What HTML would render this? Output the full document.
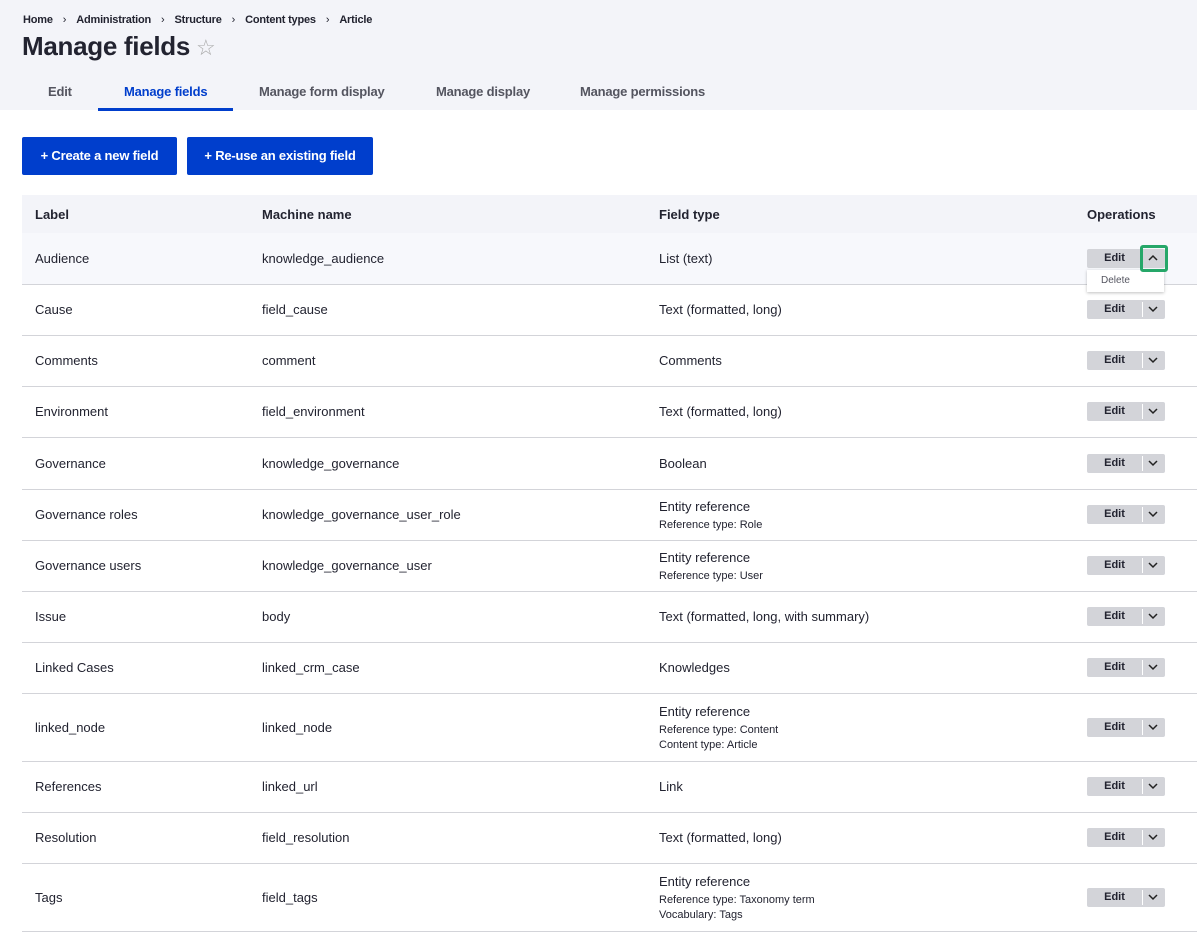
<!DOCTYPE html>
<html><head><meta charset="utf-8"><style>
*{box-sizing:border-box;margin:0;padding:0}
body{width:1197px;height:934px;overflow:hidden;background:#fff;font-family:"Liberation Sans",sans-serif;color:#222330;font-size:13px}
.hdr{background:#f3f4f9;height:110px;position:relative}
.bc{position:absolute;left:23px;top:14px;font-size:11px;font-weight:bold;color:#222330;letter-spacing:-0.2px}
.bc span.s{margin:0 10px;font-weight:normal}
h1{position:absolute;left:22px;top:31px;font-size:26px;font-weight:bold;color:#222330;letter-spacing:-0.3px}
h1 .star{font-weight:normal;color:#aaa;font-size:22px;margin-left:6px}
.tab{position:absolute;top:84px;font-size:13px;font-weight:bold;color:#545560;white-space:nowrap;letter-spacing:-0.2px}
.tab.a{color:#003ecc}
.ul{position:absolute;left:98px;top:108px;width:135px;height:3px;background:#003ecc}
.btn{position:absolute;top:137px;height:38px;background:#003ecc;color:#fff;font-weight:bold;font-size:13px;line-height:38px;text-align:center;border-radius:2px;letter-spacing:-0.2px}
table{position:absolute;left:22px;top:195px;width:1175px;border-collapse:collapse}
th{background:#f3f4f9;height:38px;text-align:left;font-size:13px;font-weight:bold;padding-left:13px}
td{border-bottom:1px solid #d3d4d9;padding-left:13px;font-size:13px;vertical-align:middle}
td small{display:block;font-size:11px;margin-top:5px}
tr.hi td{background:#f7f8fc}
.ops{position:relative;width:78px;height:19px;background:#d3d4d9;border-radius:2px}
.ops b{position:absolute;left:0;top:0;width:55px;line-height:19px;text-align:center;font-size:11px}
.ops i{position:absolute;left:55px;top:2px;width:1px;height:15px;background:#fff}
.ops svg{position:absolute;left:61px;top:5px}
.dd{position:absolute;left:1087px;top:270px;width:77px;height:22px;background:#fff;box-shadow:0 1px 3px rgba(0,0,0,.25);font-size:10px;color:#545560;padding:5px 14px}
.focus{position:absolute;left:1140px;top:245px;width:28px;height:27px;border:3px solid #26a769;border-radius:3px}
</style></head><body>
<div class="hdr">
<div class="bc">Home<span class="s">›</span>Administration<span class="s">›</span>Structure<span class="s">›</span>Content types<span class="s">›</span>Article</div>
<h1>Manage fields<span class="star">☆</span></h1>
<div class="tab" style="left:48px">Edit</div>
<div class="tab a" style="left:124px">Manage fields</div>
<div class="tab" style="left:259px">Manage form display</div>
<div class="tab" style="left:436px">Manage display</div>
<div class="tab" style="left:580px">Manage permissions</div>
<div class="ul"></div>
</div>
<div class="btn" style="left:22px;width:155px">+ Create a new field</div>
<div class="btn" style="left:187px;width:186px">+ Re-use an existing field</div>
<table>
<colgroup><col style="width:227px"><col style="width:397px"><col style="width:428px"><col></colgroup>
<tr><th>Label</th><th>Machine name</th><th>Field type</th><th>Operations</th></tr>
<tr class="hi" style="height:51px"><td>Audience</td><td>knowledge_audience</td><td>List (text)</td><td><div class="ops"><b>Edit</b><i></i><svg width="10" height="8" viewBox="0 0 10 8"><path d="M1 6L5 2L9 6" fill="none" stroke="#222" stroke-width="1.5"/></svg></div></td></tr>
<tr style="height:51px"><td>Cause</td><td>field_cause</td><td>Text (formatted, long)</td><td><div class="ops"><b>Edit</b><i></i><svg width="10" height="8" viewBox="0 0 10 8"><path d="M1 2L5 6L9 2" fill="none" stroke="#222" stroke-width="1.5"/></svg></div></td></tr>
<tr style="height:51px"><td>Comments</td><td>comment</td><td>Comments</td><td><div class="ops"><b>Edit</b><i></i><svg width="10" height="8" viewBox="0 0 10 8"><path d="M1 2L5 6L9 2" fill="none" stroke="#222" stroke-width="1.5"/></svg></div></td></tr>
<tr style="height:51px"><td>Environment</td><td>field_environment</td><td>Text (formatted, long)</td><td><div class="ops"><b>Edit</b><i></i><svg width="10" height="8" viewBox="0 0 10 8"><path d="M1 2L5 6L9 2" fill="none" stroke="#222" stroke-width="1.5"/></svg></div></td></tr>
<tr style="height:52px"><td>Governance</td><td>knowledge_governance</td><td>Boolean</td><td><div class="ops"><b>Edit</b><i></i><svg width="10" height="8" viewBox="0 0 10 8"><path d="M1 2L5 6L9 2" fill="none" stroke="#222" stroke-width="1.5"/></svg></div></td></tr>
<tr style="height:51px"><td>Governance roles</td><td>knowledge_governance_user_role</td><td>Entity reference<small>Reference type: Role</small></td><td><div class="ops"><b>Edit</b><i></i><svg width="10" height="8" viewBox="0 0 10 8"><path d="M1 2L5 6L9 2" fill="none" stroke="#222" stroke-width="1.5"/></svg></div></td></tr>
<tr style="height:51px"><td>Governance users</td><td>knowledge_governance_user</td><td>Entity reference<small>Reference type: User</small></td><td><div class="ops"><b>Edit</b><i></i><svg width="10" height="8" viewBox="0 0 10 8"><path d="M1 2L5 6L9 2" fill="none" stroke="#222" stroke-width="1.5"/></svg></div></td></tr>
<tr style="height:51px"><td>Issue</td><td>body</td><td>Text (formatted, long, with summary)</td><td><div class="ops"><b>Edit</b><i></i><svg width="10" height="8" viewBox="0 0 10 8"><path d="M1 2L5 6L9 2" fill="none" stroke="#222" stroke-width="1.5"/></svg></div></td></tr>
<tr style="height:51px"><td>Linked Cases</td><td>linked_crm_case</td><td>Knowledges</td><td><div class="ops"><b>Edit</b><i></i><svg width="10" height="8" viewBox="0 0 10 8"><path d="M1 2L5 6L9 2" fill="none" stroke="#222" stroke-width="1.5"/></svg></div></td></tr>
<tr style="height:68px"><td>linked_node</td><td>linked_node</td><td>Entity reference<small>Reference type: Content</small><small style="margin-top:3px">Content type: Article</small></td><td><div class="ops"><b>Edit</b><i></i><svg width="10" height="8" viewBox="0 0 10 8"><path d="M1 2L5 6L9 2" fill="none" stroke="#222" stroke-width="1.5"/></svg></div></td></tr>
<tr style="height:51px"><td>References</td><td>linked_url</td><td>Link</td><td><div class="ops"><b>Edit</b><i></i><svg width="10" height="8" viewBox="0 0 10 8"><path d="M1 2L5 6L9 2" fill="none" stroke="#222" stroke-width="1.5"/></svg></div></td></tr>
<tr style="height:51px"><td>Resolution</td><td>field_resolution</td><td>Text (formatted, long)</td><td><div class="ops"><b>Edit</b><i></i><svg width="10" height="8" viewBox="0 0 10 8"><path d="M1 2L5 6L9 2" fill="none" stroke="#222" stroke-width="1.5"/></svg></div></td></tr>
<tr style="height:68px"><td>Tags</td><td>field_tags</td><td>Entity reference<small>Reference type: Taxonomy term</small><small style="margin-top:3px">Vocabulary: Tags</small></td><td><div class="ops"><b>Edit</b><i></i><svg width="10" height="8" viewBox="0 0 10 8"><path d="M1 2L5 6L9 2" fill="none" stroke="#222" stroke-width="1.5"/></svg></div></td></tr>
</table>
<div class="dd">Delete</div>
<div class="focus"></div>
</body></html>
